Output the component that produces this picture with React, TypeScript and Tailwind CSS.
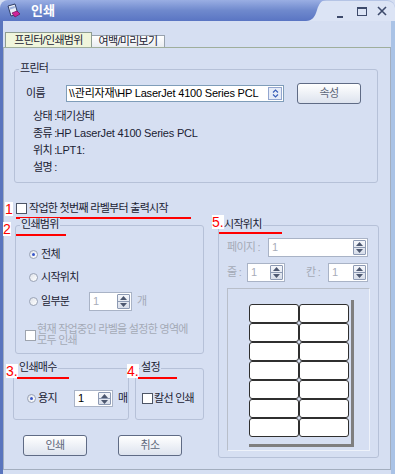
import React from 'react';

const Tri = ({ up }: { up?: boolean }) => (
  <svg width="7" height="4" viewBox="0 0 7 4">
    <path d={up ? 'M0 4 L3.5 0 L7 4 Z' : 'M0 0 L3.5 4 L7 0 Z'} fill="#4d5870" />
  </svg>
);

const Spin = ({ size, value, dim }: { size: string; value: string; dim?: boolean }) => (
  <div className={`flex items-stretch bg-white border border-[#a9b3c6] ${size}`}>
    <span className={`flex-1 pl-[3px] flex items-center ${dim ? 'text-[#a7adb9]' : 'text-black'}`}>{value}</span>
    <span className="w-[13px] my-[1px] mr-[1px] flex flex-col border border-[#8d9ab3] rounded-[1px] bg-gradient-to-b from-[#f5f7fb] to-[#d8deea]">
      <span className="flex-1 flex items-center justify-center border-b border-[#8d9ab3]">
        <Tri up />
      </span>
      <span className="flex-1 flex items-center justify-center">
        <Tri />
      </span>
    </span>
  </div>
);

const Radio = ({ on }: { on?: boolean }) => (
  <span className="w-[9px] h-[9px] shrink-0 rounded-full border border-[#9aa3b5] bg-gradient-to-br from-[#dfe3ea] to-white flex items-center justify-center">
    {on && <span className="w-[3px] h-[3px] rounded-full bg-[#3756c9]" />}
  </span>
);

const Check = ({ dim }: { dim?: boolean }) => (
  <span className={`w-[11px] h-[11px] shrink-0 border bg-white ${dim ? 'border-[#9ea4ae]' : 'border-[#4d5566]'}`} />
);

const Btn = ({ label }: { label: string }) => (
  <button className="w-[64px] h-[21px] rounded-[3px] border border-[#5f6b85] bg-gradient-to-b from-white to-[#dde3ee] text-[#5d6679] flex items-center justify-center">
    {label}
  </button>
);

const Group = ({ label, className, children }: { label: string; className: string; children?: React.ReactNode }) => (
  <div className={`relative border border-[#b6c1d8] rounded-[3px] ${className}`}>
    <span className="absolute -top-[8px] left-[4px] px-[1px] bg-[#d6dff2] leading-[13px] text-[#1b2233]">{label}</span>
    {children}
  </div>
);

// red annotation marks laid over the dialog
const Mark = ({ text, pos }: { text: string; pos: string }) => (
  <span className={`absolute bg-white text-[#ff0000] text-[14px] leading-[14px] tracking-normal font-['Liberation_Sans'] ${pos}`}>{text}</span>
);

const RedLine = ({ pos }: { pos: string }) => <span className={`absolute h-[2px] bg-[#ff0000] ${pos}`} />;

export default function App() {
  return (
    <div className="w-[395px] h-[474px] bg-[#d6dff2] overflow-hidden flex flex-col text-[11px] tracking-[-0.7px] text-[#1b2233] font-['Liberation_Sans','Noto_Sans_CJK_KR',sans-serif]">
      {/* title bar */}
      <div className="h-[21px] flex shrink-0">
        <div className="w-[306px] rounded-tl-[8px] bg-gradient-to-b from-[#9aaee3] via-[#6f89cd] to-[#5a75c3] flex items-center pl-[6px] gap-[9px]">
          <svg width="16" height="16" viewBox="0 0 16 16">
            <path d="M2 3 L9 1 L12 11 L5 13 Z" fill="#e9eef8" stroke="#2f3d66" strokeWidth="1" />
            <path d="M3.5 4.5 L8.5 3 L9 5 L4 6.5 Z" fill="#9fb3dd" />
            <path d="M6 10 L11 8 L14 11 L9 14 Z" fill="#d0249a" stroke="#7a1460" strokeWidth="0.8" />
          </svg>
          <span className="text-white font-bold text-[13px] tracking-normal">인쇄</span>
        </div>
        <div className="flex-1 relative bg-[#dce4f5] rounded-tr-[8px] border-t border-[#b5c4e5] flex items-center">
          <svg className="absolute left-0 -top-[1px]" width="22" height="21" viewBox="0 0 22 21">
            <defs>
              <linearGradient id="tb" x1="0" y1="0" x2="0" y2="1">
                <stop offset="0" stopColor="#9aaee3" />
                <stop offset="0.5" stopColor="#6f89cd" />
                <stop offset="1" stopColor="#5a75c3" />
              </linearGradient>
            </defs>
            <path d="M0 0 L21 0 C15 0 13 4 11 10 C9 17 6 21 0 21 Z" fill="url(#tb)" />
          </svg>
          <span className="ml-[31px] mt-[11px] w-[6px] h-[2px] bg-[#3d4a6b]" />
          <span className="ml-[14px] w-[10px] h-[9px] border border-t-2 border-[#3d4a6b]" />
          <svg className="ml-[10px]" width="10" height="10" viewBox="0 0 10 10">
            <path d="M1 1 L9 9 M9 1 L1 9" stroke="#3d4a6b" strokeWidth="1.6" />
          </svg>
        </div>
      </div>

      {/* window body */}
      <div className="flex-1 border-l-[3px] border-r-[4px] border-l-[#5a75be] border-r-[#aac3e6] pt-[11px]">
        {/* tabs */}
        <div className="flex items-end h-[15px] pl-[2px]">
          <div className="w-[87px] h-[15px] bg-[#f0f5dc] border border-b-0 border-[#8e9c90] flex items-center justify-center text-[#1b2233]">
            프린터/인쇄범위
          </div>
          <div className="w-[73px] h-[12px] bg-gradient-to-b from-white to-[#e9ecf1] border border-b-0 border-l-0 border-[#98a2ae] flex items-center justify-center text-[#1b2233]">
            여백/미리보기
          </div>
        </div>

        {/* tab panel */}
        <div className="h-[423px] border border-[#a3aebf] border-t-[#9fae9c] pl-[10px] pt-[21px]">
          <Group label="프린터" className="w-[364px] h-[114px]">
            <div className="pt-[13px] pl-[11px] flex items-center h-[34px]">
              <span className="w-[40px]">이름</span>
              <div className="w-[218px] h-[17px] bg-white border border-[#7f9db9] flex items-center">
                <span className="flex-1 pl-[2px] tracking-[-0.2px] text-black whitespace-nowrap overflow-hidden">\\관리자재\HP LaserJet 4100 Series PCL</span>
                <span className="w-[14px] h-[13px] mr-[1px] border border-[#93a6cf] bg-[#e6ecf8] flex items-center justify-center">
                  <svg width="7" height="9" viewBox="0 0 7 9">
                    <path d="M1 3.5 L3.5 1 L6 3.5 M1 5.5 L3.5 8 L6 5.5" stroke="#3a5fb8" strokeWidth="1.2" fill="none" />
                  </svg>
                </span>
              </div>
              <div className="ml-[13px]">
                <Btn label="속성" />
              </div>
            </div>
            <div className="mt-[4px] pl-[18px] leading-[17px]">
              <div>상태 :대기상태</div>
              <div>
                종류 :<span className="tracking-[-0.2px]">HP LaserJet 4100 Series PCL</span>
              </div>
              <div>
                위치 :<span className="tracking-[-0.2px]">LPT1:</span>
              </div>
              <div>설명 :</div>
            </div>
          </Group>

          <div className="flex items-start mt-[20px]">
            {/* left column */}
            <div className="w-[190px] flex flex-col">
              <div className="relative ml-[2px] h-[11px] flex items-center gap-[2px]">
                <Mark text="1" pos="-left-[11px] -top-[1px]" />
                <Check />
                <span className="leading-[11px] whitespace-nowrap">작업한 첫번째 라벨부터 출력시작</span>
                <RedLine pos="left-0 top-[14px] w-[175px]" />
              </div>

              <Group label="인쇄범위" className="ml-[1px] mt-[11px] w-[189px] h-[129px]">
                <Mark text="2" pos="-left-[13px] -top-[4px]" />
                <RedLine pos="left-0 top-[8px] w-[50px]" />
                <div className="pt-[22px] pl-[13px] flex flex-col">
                  <div className="h-[12px] flex items-center gap-[3px]">
                    <Radio on />
                    <span>전체</span>
                  </div>
                  <div className="mt-[11px] h-[12px] flex items-center gap-[3px]">
                    <Radio />
                    <span>시작위치</span>
                  </div>
                  <div className="mt-[9px] h-[19px] flex items-center gap-[3px]">
                    <Radio />
                    <span className="w-[45px]">일부분</span>
                    <Spin size="w-[43px] h-[19px]" value="1" dim />
                    <span className="ml-[2px] text-[#a4aab6]">개</span>
                  </div>
                </div>
                <div className="mt-[13px] ml-[9px] flex items-center gap-[1px] text-[#a4aab6]">
                  <Check dim />
                  <span className="leading-[11px] whitespace-nowrap">
                    현재 작업중인 라벨을 설정한 영역에
                    <br />
                    모두 인쇄
                  </span>
                </div>
              </Group>

              <div className="flex -ml-[1px] mt-[14px]">
                <Group label="인쇄매수" className="w-[116px] h-[52px]">
                  <Mark text="3." pos="-left-[8px] -top-[5px]" />
                  <RedLine pos="left-[3px] top-[8px] w-[52px]" />
                  <div className="pt-[21px] pl-[13px] flex items-center h-[38px] gap-[2px]">
                    <Radio on />
                    <span className="w-[34px]">용지</span>
                    <Spin size="w-[39px] h-[17px]" value="1" />
                    <span className="ml-[3px]">매</span>
                  </div>
                </Group>
                <Group label="설정" className="ml-[6px] w-[69px] h-[52px]">
                  <Mark text="4." pos="-left-[9px] -top-[5px]" />
                  <RedLine pos="left-[2px] top-[8px] w-[39px]" />
                  <div className="pt-[23px] pl-[6px] flex items-center h-[35px] gap-[1px]">
                    <Check />
                    <span className="whitespace-nowrap">칼선 인쇄</span>
                  </div>
                </Group>
              </div>

              <div className="flex mt-[15px] ml-[9px] gap-[31px]">
                <Btn label="인쇄" />
                <Btn label="취소" />
              </div>
            </div>

            {/* right column */}
            <Group label="시작위치" className="ml-[14px] mt-[22px] w-[161px] h-[233px]">
              <Mark text="5." pos="-left-[7px] -top-[11px]" />
              <RedLine pos="left-0 top-[6px] w-[63px]" />
              <div className="pt-[12px] pl-[8px] flex flex-col">
                <div className="flex items-center h-[19px]">
                  <span className="w-[41px] text-[#a4aab6]">페이지 :</span>
                  <Spin size="w-[100px] h-[19px]" value="1" dim />
                </div>
                <div className="flex items-center h-[19px] mt-[6px]">
                  <span className="w-[20px] text-[#a4aab6]">줄 :</span>
                  <Spin size="w-[38px] h-[19px]" value="1" dim />
                  <span className="ml-[21px] w-[22px] text-[#a4aab6]">칸 :</span>
                  <Spin size="w-[40px] h-[19px]" value="1" dim />
                </div>
                <div className="mt-[6px] w-[143px] h-[163px] border border-[#b8bec9] border-r-[#eef2fa] border-b-[#eef2fa] pl-[21px] pt-[11px]">
                  <div className="w-fit border-r-[3px] border-b-[3px] border-[#7f7f7f] pt-[4px] pr-[2px] pb-[7px]">
                    <div className="grid grid-cols-[50px_50px]">
                      {Array.from({ length: 14 }).map((_, i) => (
                        <div key={i} className="h-[19px] bg-white border border-[#2f2f2f] rounded-[3px]" />
                      ))}
                    </div>
                  </div>
                </div>
              </div>
            </Group>
          </div>
        </div>
      </div>
    </div>
  );
}
